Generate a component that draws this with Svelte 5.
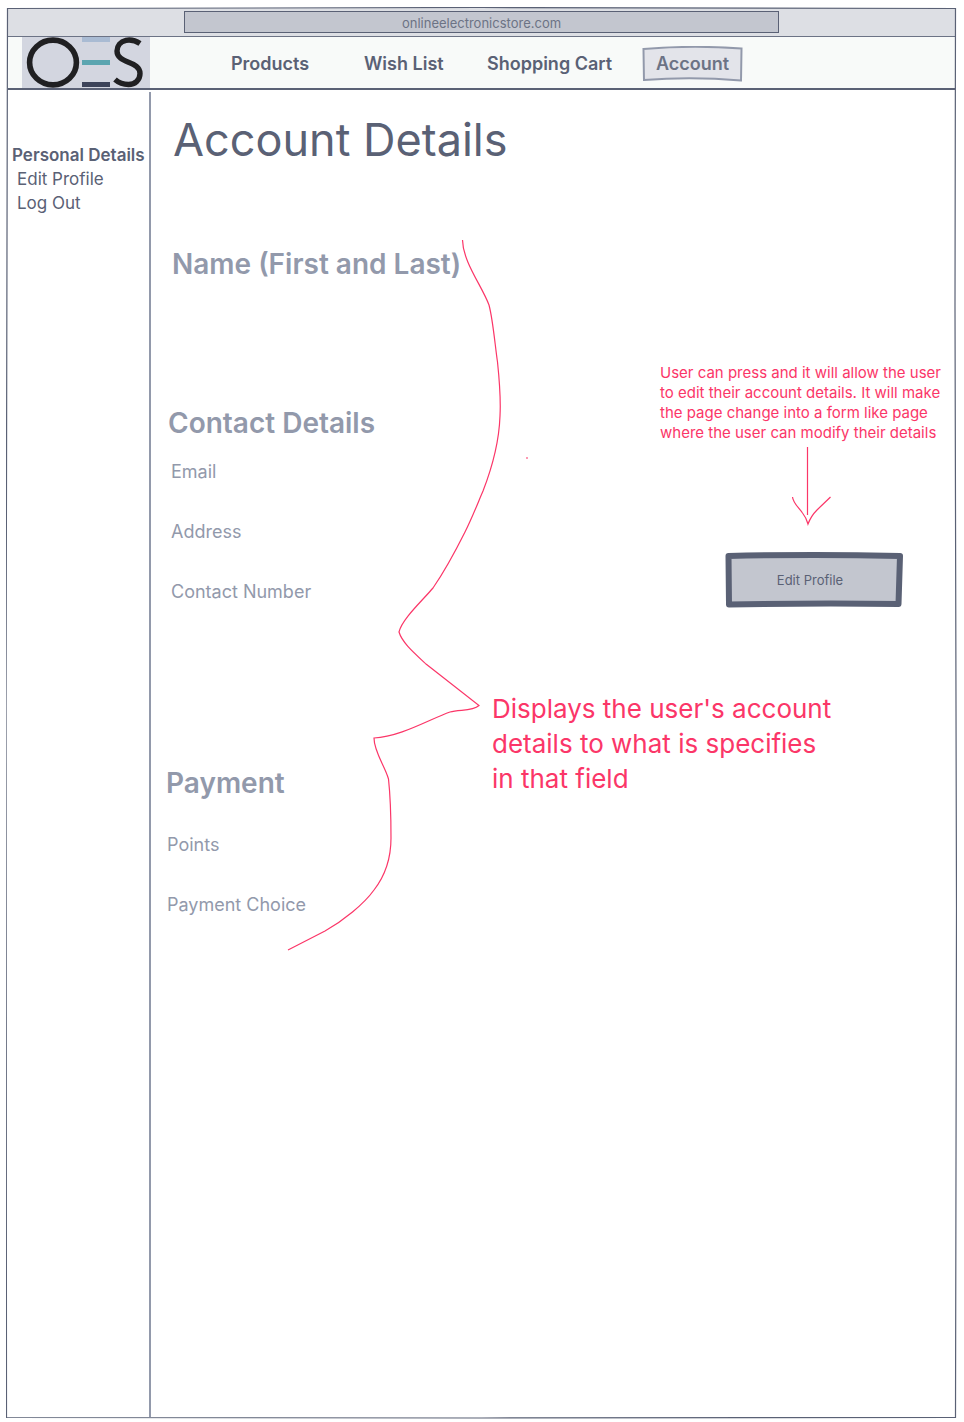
<script>
  const navLinks = ['Products', 'Wish List', 'Shopping Cart'];
  const sections = [
    { id: 'name', title: 'Name (First and Last)', fields: [] },
    { id: 'contact', title: 'Contact Details', fields: ['Email', 'Address', 'Contact Number'] },
    { id: 'payment', title: 'Payment', fields: ['Points', 'Payment Choice'] }
  ];
</script>

<div class="page">
  <div class="browser">
    <div class="address">onlineelectronicstore.com</div>
  </div>

  <header>
    <a class="logo" href="#home" aria-label="OES home">
      <svg viewBox="0 0 128 51" width="128" height="51" aria-hidden="true">
        <rect width="128" height="51" fill="#d3d6e0" />
        <ellipse cx="31" cy="25.5" rx="23.400" ry="22.400" fill="none" stroke="#202022" stroke-width="5.600" />
        <rect x="60" y="0" width="28" height="5" fill="#a9bbd3" />
        <rect x="60" y="23" width="28" height="5" fill="#5ba5b0" />
        <rect x="60" y="45" width="28" height="5" fill="#3c4359" />
        <path d="M118 6.500 C112 2.500 107 2.800 104 3.300 C98.500 4.500 95 9 95 14 C95 27 118 23.500 118 36.500 C118 43 113 47.500 106.500 47.500 C101 47.500 97 46 93 42.500" fill="none" stroke="#202022" stroke-width="5.400" />
      </svg>
    </a>
    <nav aria-label="Main">
      {#each navLinks as link}
        <a href="#{link.toLowerCase().replace(' ', '-')}">{link}</a>
      {/each}
      <a class="current" href="#account" aria-current="page">
        <svg viewBox="0 0 102 37" preserveAspectRatio="none" aria-hidden="true">
          <path d="M1.500 3 Q50 -1 100.500 2.500 L100 35.500 Q50 31 2 35 Z" fill="#e3e4ea" stroke="#9299ab" stroke-width="2" />
        </svg>
        <span>Account</span>
      </a>
    </nav>
  </header>

  <div class="body">
    <aside>
      <h2>Personal Details</h2>
      <a href="#edit">Edit Profile</a>
      <a href="#logout">Log Out</a>
    </aside>

    <main>
      <h1>Account Details</h1>
      <div class="columns">
        <div class="details">
          {#each sections as section}
            <section class={section.id}>
              <h2>{section.title}</h2>
              {#each section.fields as field}
                <p>{field}</p>
              {/each}
            </section>
          {/each}
        </div>
        <div class="side">
          <div class="edit">
            <p class="note">User can press and it will allow the user<br />to edit their account details. It will make<br />the page change into a form like page<br />where the user can modify their details</p>
            <svg class="arrow" viewBox="0 0 40 80" width="40" height="80" aria-hidden="true">
              <path d="M16.500 1 V69 M1.500 51 C2 57 8 62 11.500 67 Q15.500 72 17 78 Q20 70 26 64 L39.500 51" />
            </svg>
            <button type="button">
              <svg viewBox="0 0 178 56" preserveAspectRatio="none" aria-hidden="true">
                <path d="M3.500 4 Q89 2 175 4 L173.500 52 Q89 51 4 52.500 Z" fill="#c3c6cf" stroke="#5a6175" stroke-width="6" stroke-linejoin="round" />
              </svg>
              <span>Edit Profile</span>
            </button>
          </div>
          <p class="note large">Displays the user's account<br />details to what is specifies<br />in that field</p>
        </div>
      </div>
      <svg class="brace" viewBox="287 239 244 713" width="244" height="713" aria-hidden="true">
        <path d="M462.500 240 C463 262 482 286 489 305 C493 320 495 345 497.500 362 C500 386 501 398 500 416 C499 444 490 473 483 491 C479 500 473 516 465 532 C455 552 444 572 433 588 C423 600 402 619 399 632 C402 642 412 651 426 664 L479 705.500 C472 712 459 709 450 712 C430 719 400 737 374 738 C374 752 385 766 388.500 779 C391 802 391 818 391 838 C391 863 381 881 374 890 C364 904 343 921 325 931 L288 950" />
        <path d="M526 458 H528" />
      </svg>
    </main>
  </div>

  <svg class="outline" viewBox="0 0 950 1412" preserveAspectRatio="none" aria-hidden="true">
    <path d="M1.500 1.500 L475 0.500 L948.500 1.500 L948 300 L949.500 900 L948.500 1410.500 L475 1411 L0.500 1410.500 L0 700 Z" />
  </svg>
</div>

<style>
  :global(body) {
    background: #fff;
  }
  .page {
    position: relative;
    box-sizing: border-box;
    min-height: 100vh;
    padding: 8px 9px 5px 8px;
    display: flex;
    flex-direction: column;
    font-family: Inter, 'Liberation Sans', sans-serif;
    color: #5a6175;
  }
  h1, h2, p {
    margin: 0;
  }
  a {
    color: inherit;
    text-decoration: none;
  }
  .browser {
    box-sizing: border-box;
    height: 29px;
    padding: 3px 176px;
    background: #dddfe4;
    border-bottom: 1px solid #6c7385;
  }
  .address {
    box-sizing: border-box;
    height: 22px;
    border: 1px solid #5a6175;
    background: #c3c6cf;
    font-size: 13px;
    line-height: 22px;
    text-align: center;
    color: #6c7385;
  }
  header {
    display: flex;
    align-items: flex-start;
    height: 51px;
    padding-left: 14px;
    background: #f8faf9;
    border-bottom: 2px solid #5a6175;
  }
  .logo,
  .logo svg {
    display: block;
  }
  nav {
    display: grid;
    grid-template-columns: 133px 123px 155px 101px;
    align-items: center;
    height: 53px;
    padding-left: 81px;
    font-size: 18px;
    line-height: 24px;
    font-weight: 600;
  }
  .current {
    position: relative;
    padding: 6px 0;
    text-align: center;
    color: #6c7385;
  }
  .current svg,
  button svg,
  .outline {
    position: absolute;
    left: 0;
    top: 0;
    width: 100%;
    height: 100%;
  }
  .current span,
  button span {
    position: relative;
  }
  .body {
    flex: 1;
    display: flex;
  }
  aside {
    box-sizing: border-box;
    width: 143px;
    flex: none;
    margin-top: 2px;
    padding: 51px 0 0 9px;
    border-right: 2px solid #9299ab;
    display: flex;
    flex-direction: column;
    font-size: 17px;
    line-height: 24px;
  }
  aside h2 {
    margin-left: -5px;
    font-size: 17px;
    line-height: 24px;
    font-weight: 600;
    white-space: nowrap;
  }
  main {
    position: relative;
    flex: 1;
    padding: 20px 15px 40px;
  }
  h1 {
    padding-left: 7px;
    font-size: 45px;
    line-height: 60px;
    font-weight: 400;
  }
  .columns {
    display: flex;
    padding-top: 72px;
  }
  .details {
    width: 326px;
    flex: none;
    color: #9299ab;
  }
  .details h2 {
    font-size: 28px;
    line-height: 44px;
    font-weight: 600;
    white-space: nowrap;
  }
  .details p {
    padding: 18px 3px;
    font-size: 18px;
    line-height: 24px;
  }
  .name {
    padding-left: 6px;
  }
  .contact {
    padding: 115px 0 0 2px;
  }
  .contact p:first-of-type {
    padding-top: 15px;
  }
  .payment {
    padding-top: 139px;
  }
  .payment p {
    padding-left: 1px;
  }
  .payment p:first-of-type {
    padding-top: 28px;
  }
  .side {
    flex: 1;
    padding-top: 121px;
    display: flex;
    flex-direction: column;
  }
  .edit {
    align-self: flex-end;
    width: 280px;
  }
  .note {
    font-size: 15px;
    line-height: 20px;
    color: #fb3668;
    white-space: nowrap;
  }
  .note.large {
    padding-top: 83px;
    font-size: 26px;
    line-height: 35px;
  }
  .arrow {
    display: block;
    margin: 3px 0 26px 131px;
  }
  .arrow path,
  .brace path {
    fill: none;
    stroke: #fb3668;
    stroke-width: 1.2;
  }
  button {
    position: relative;
    display: block;
    width: 178px;
    height: 56px;
    margin-left: 65px;
    padding: 0 8px 0 0;
    border: 0;
    background: none;
    font: inherit;
    font-size: 13px;
    color: #5a6175;
  }
  .brace {
    position: absolute;
    left: 136px;
    top: 149px;
  }
  .outline {
    left: 6px;
    top: 7px;
    width: calc(100% - 13px);
    height: calc(100% - 10px);
    pointer-events: none;
  }
  .outline path {
    fill: none;
    stroke: #5a6175;
    stroke-width: 1.2;
    vector-effect: non-scaling-stroke;
  }
</style>
